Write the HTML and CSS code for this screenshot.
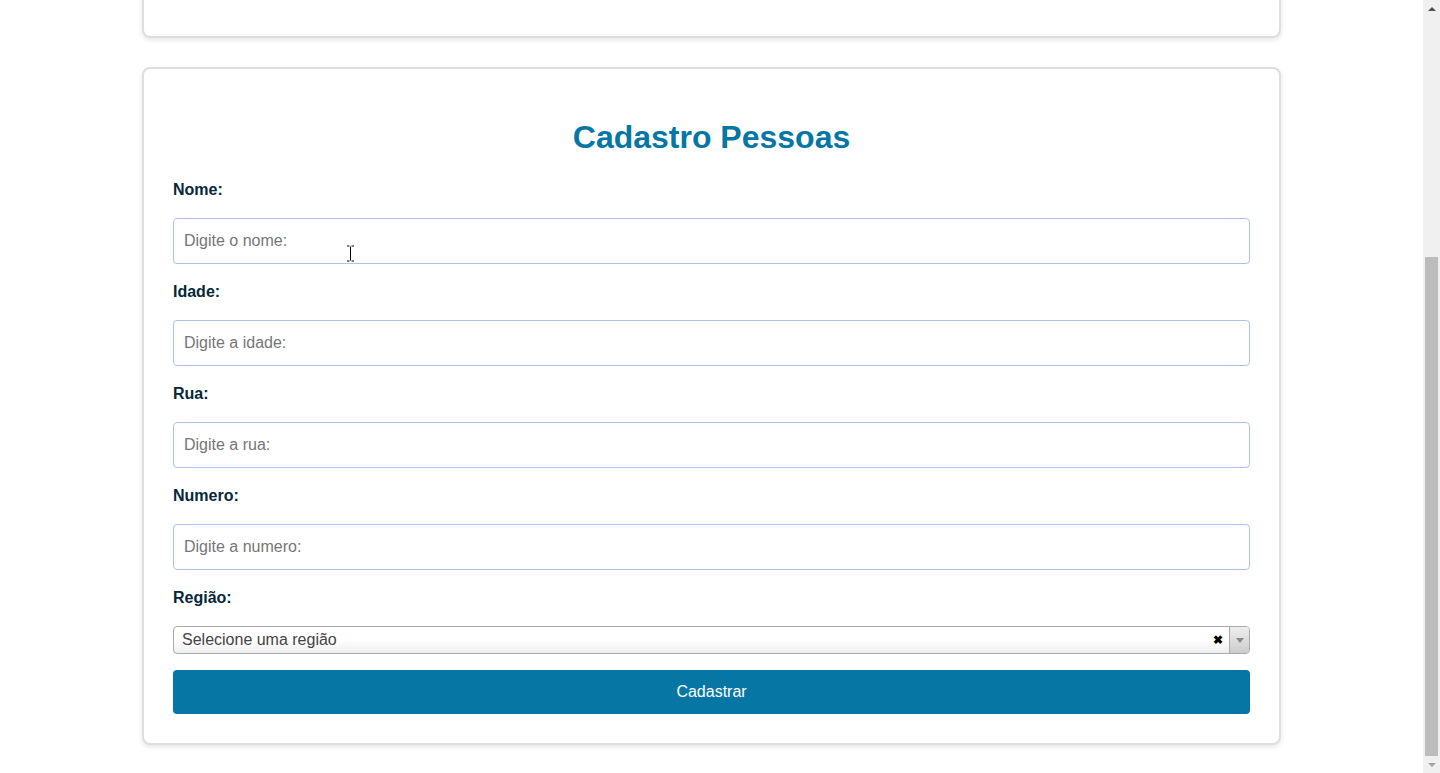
FILE: index.html
```html
<!DOCTYPE html>
<html lang="pt-BR">
<head>
<meta charset="utf-8">
<title>Cadastro Pessoas</title>
<link rel="stylesheet" href="styles.css">
</head>
<body>
<div class="page">
  <main class="content">
    <section class="card card-prev"></section>
    <section class="card">
      <h1 class="title">Cadastro Pessoas</h1>
      <form class="form">
        <label class="label" for="nome">Nome:</label>
        <div class="field-wrap">
          <input class="input" id="nome" type="text" placeholder="Digite o nome:">
          <svg class="cursor" width="9" height="17" viewBox="0 0 9 17"><path d="M1 1h2.5M5.5 1H8M4.5 1.5v14M1 16h2.5M5.5 16H8" stroke="#000" stroke-width="1" fill="none"/></svg>
        </div>
        <label class="label" for="idade">Idade:</label>
        <input class="input" id="idade" type="text" placeholder="Digite a idade:">
        <label class="label" for="rua">Rua:</label>
        <input class="input" id="rua" type="text" placeholder="Digite a rua:">
        <label class="label" for="numero">Numero:</label>
        <input class="input" id="numero" type="text" placeholder="Digite a numero:">
        <label class="label">Região:</label>
        <div class="select">
          <span class="select-text">Selecione uma região</span>
          <span class="select-clear">&#x2716;</span>
          <span class="select-arrow"><span class="tri"></span></span>
        </div>
        <button class="btn" type="button">Cadastrar</button>
      </form>
    </section>
  </main>
  <div class="scrollbar">
    <div class="sb-btn"><span class="sb-up"></span></div>
    <div class="sb-track"><div class="sb-thumb"></div></div>
    <div class="sb-btn"><span class="sb-down"></span></div>
  </div>
</div>
</body>
</html>
```

FILE: styles.css
```css
* { box-sizing: border-box; }
html, body { margin: 0; padding: 0; height: 773px; overflow: hidden; background: #fff; }
body { font-family: Arial, "Liberation Sans", sans-serif; }

.page { display: flex; height: 773px; }
.content { flex: 1; display: flex; flex-direction: column; align-items: center; gap: 29px; overflow: hidden; }

.card {
  width: 1139px;
  background: #fff;
  border: 2px solid #dedede;
  border-radius: 8px;
  box-shadow: 0 2px 5px rgba(0,0,0,0.10);
  padding: 28px 29px 29px;
  flex-shrink: 0;
}
.card-prev { margin-top: -100px; height: 138px; }

.title {
  margin: 22px 0 0;
  text-align: center;
  font-size: 32px;
  font-weight: bold;
  color: #0677a5;
  line-height: 36px;
}

.form { display: flex; flex-direction: column; margin-top: 26px; }
.label {
  font-size: 16px;
  font-weight: bold;
  color: #05283a;
  line-height: 18px;
  margin-bottom: 19px;
}
.input, .field-wrap { margin-bottom: 19px; }
.field-wrap { position: relative; }
.field-wrap .input { margin-bottom: 0; width: 100%; }
.input {
  height: 46px;
  border: 1px solid #aec3e6;
  border-radius: 4px;
  padding: 0 10px;
  font-family: Arial, "Liberation Sans", sans-serif;
  font-size: 16px;
  color: #333;
  outline: none;
}
.input::placeholder { color: #767676; }
.cursor { position: absolute; left: 173px; top: 27px; }

.select {
  height: 28px;
  border: 1px solid #aaa;
  border-radius: 4px;
  background: linear-gradient(#fff 0%, #fff 50%, #eee 100%);
  display: flex;
  align-items: center;
  padding-left: 8px;
  margin-bottom: 16px;
  overflow: hidden;
}
.select-text { flex: 1; font-size: 16px; color: #444; }
.select-clear { font-size: 12px; color: #000; font-weight: bold; margin-right: 6px; }
.select-arrow {
  width: 20px;
  align-self: stretch;
  border-left: 1px solid #aaa;
  background: linear-gradient(#eee, #ccc);
  display: flex;
  align-items: center;
  justify-content: center;
}
.tri { width: 0; height: 0; border-left: 4px solid transparent; border-right: 4px solid transparent; border-top: 5px solid #888; }

.btn {
  height: 44px;
  border: none;
  border-radius: 4px;
  background: #0677a5;
  color: #fff;
  font-family: Arial, "Liberation Sans", sans-serif;
  font-size: 16px;
}

.scrollbar { width: 17px; background: #f0f0f0; display: flex; flex-direction: column; }
.sb-btn { height: 17px; display: flex; align-items: center; justify-content: center; }
.sb-up { width: 0; height: 0; border-left: 4px solid transparent; border-right: 4px solid transparent; border-bottom: 4px solid #505050; }
.sb-down { width: 0; height: 0; border-left: 4px solid transparent; border-right: 4px solid transparent; border-top: 4px solid #a3a3a3; }
.sb-track { flex: 1; padding: 240px 2px 0; }
.sb-thumb { height: 499px; background: #bcbcbc; }
```
